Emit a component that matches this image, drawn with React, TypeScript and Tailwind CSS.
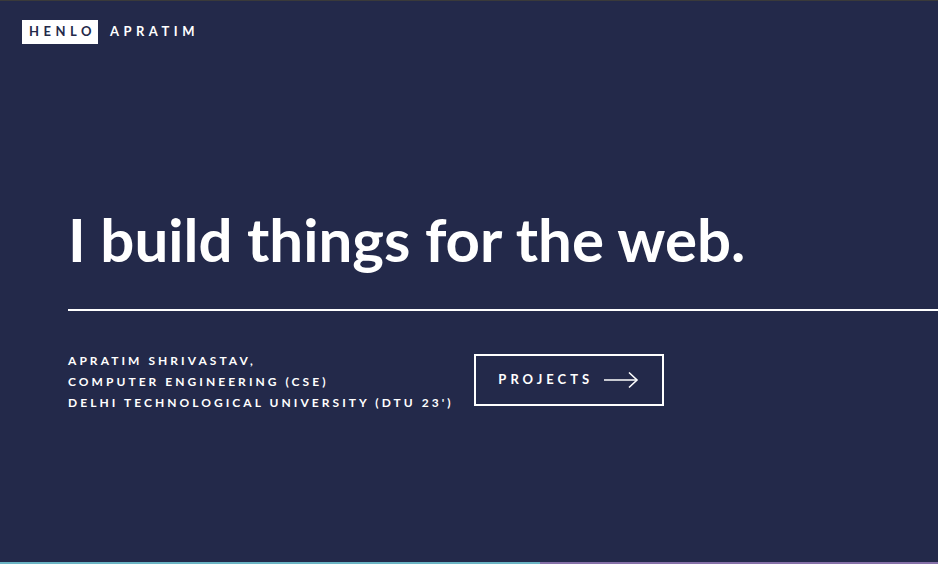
import React from 'react';

const font = { fontFamily: '"Lato", "Liberation Sans", sans-serif' };

export default function App() {
  return (
    <div
      className="relative w-[938px] h-[564px] overflow-hidden bg-[#23294a] text-white border-t border-[#3a3a3a]"
      style={font}
    >
      {/* header */}
      <header className="flex items-center gap-3 pl-[22px] pt-[19px]">
        <span className="bg-white text-[#23294a] font-bold text-[13px] tracking-[4.5px] h-6 pl-[7px] pr-[2px] flex items-center">
          HENLO
        </span>
        <span className="font-bold text-[13px] tracking-[4.5px]">APRATIM</span>
      </header>

      {/* hero */}
      <main className="pl-[68px] pt-[160px]">
        <h1 className="font-bold text-[60px] leading-[70px]">
          I build things for the web.
        </h1>
        <div className="h-[2px] bg-white mt-[35px]" />

        <div className="flex items-start gap-[20px] mt-[39px]">
          <div className="font-bold text-[12px] tracking-[3.05px] leading-[21px]">
            <p>APRATIM SHRIVASTAV,</p>
            <p>COMPUTER ENGINEERING (CSE)</p>
            <p>DELHI TECHNOLOGICAL UNIVERSITY (DTU 23')</p>
          </div>
          <button className="mt-[4px] w-[190px] h-[52px] border-2 border-white flex items-center justify-center gap-[10px] font-bold text-[13px] tracking-[4px]">
            <span>PROJECTS</span>
            <svg width="36" height="18" viewBox="0 0 36 18" fill="none" stroke="white" strokeWidth="1.6">
              <path d="M1 9h33" />
              <path d="M26 1.5l8 7.5-8 7.5" />
            </svg>
          </button>
        </div>
      </main>

      {/* bottom accent */}
      <div className="absolute bottom-0 left-0 right-0 flex h-[2px]">
        <div className="w-[540px] bg-[#6ab4c4]" />
        <div className="flex-1 bg-[#8570a8]" />
      </div>
    </div>
  );
}
